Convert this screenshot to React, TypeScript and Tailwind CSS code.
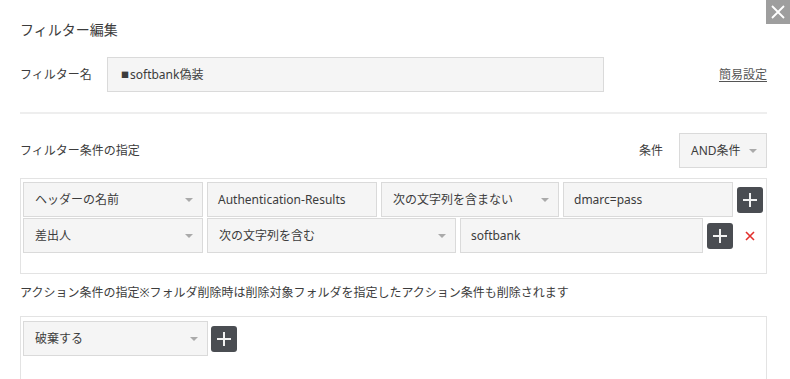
import React from "react";

const font = { fontFamily: '"Noto Sans", "Noto Sans CJK JP", sans-serif' };

const Arrow = () => (
  <span className="block w-0 h-0 border-l-[4px] border-r-[4px] border-t-[4px] border-l-transparent border-r-transparent border-t-[#aaaaaa]" />
);

const Select = ({ label, w }: { label: string; w: string }) => (
  <div
    className={`${w} h-[35px] shrink-0 flex items-center justify-between pl-[11px] pr-[9px] bg-[#f5f5f5] border border-[#dadada] text-[12px] text-[#3c3c3c]`}
  >
    <span>{label}</span>
    <Arrow />
  </div>
);

const Input = ({ value, w }: { value: string; w: string }) => (
  <div
    className={`${w} h-[35px] shrink-0 flex items-center pl-[10px] bg-[#f5f5f5] border border-[#dadada] text-[12px] text-[#3c3c3c]`}
  >
    {value}
  </div>
);

const PlusButton = () => (
  <button className="w-[26px] h-[26px] shrink-0 rounded-[3px] bg-[#4a4d52] flex items-center justify-center">
    <svg width="16" height="16" viewBox="0 0 16 16">
      <path d="M8 1v14M1 8h14" stroke="#f2f2f2" strokeWidth="2" />
    </svg>
  </button>
);

export default function App() {
  return (
    <div className="relative w-full h-[379px] overflow-hidden bg-white text-[#3c3c3c]" style={font}>
      {/* close */}
      <button className="absolute top-0 right-0 w-[24px] h-[24px] bg-[#9e9e9e] flex items-center justify-center">
        <svg width="14" height="14" viewBox="0 0 14 14">
          <path d="M1 1l12 12M13 1L1 13" stroke="#fff" strokeWidth="1.8" />
        </svg>
      </button>

      <div className="pl-[20px] pr-[23px] pt-[20px]">
        <div className="text-[14px] leading-[20px]">フィルター編集</div>

        {/* filter name */}
        <div className="mt-[17px] flex items-center justify-between">
          <div className="flex items-center">
            <span className="w-[87px] text-[12px]">フィルター名</span>
            <div className="w-[497px] h-[35px] flex items-center pl-[13px] bg-[#f5f5f5] border border-[#dadada] text-[12px]">
              <span className="text-[8px] mr-[1px]">■</span>softbank偽装
            </div>
          </div>
          <a className="text-[12px] text-[#555] underline underline-offset-2">簡易設定</a>
        </div>

        <div className="mt-[20px] h-[2px] bg-[#eeeeee]" />

        {/* filter conditions */}
        <div className="mt-[19px] flex items-center justify-between">
          <span className="text-[12px] mt-[1px]">フィルター条件の指定</span>
          <div className="flex items-center gap-[16px]">
            <span className="text-[12px]">条件</span>
            <Select label="AND条件" w="w-[88px]" />
          </div>
        </div>

        <div className="mt-[10px] border border-[#e3e3e3] px-[2px] pt-[3px] pb-[20px] flex flex-col gap-[1px]">
          <div className="flex items-center gap-[4px]">
            <Select label="ヘッダーの名前" w="w-[180px]" />
            <Input value="Authentication-Results" w="w-[170px]" />
            <Select label="次の文字列を含まない" w="w-[178px]" />
            <Input value="dmarc=pass" w="w-[170px]" />
            <PlusButton />
          </div>
          <div className="flex items-center gap-[4px]">
            <Select label="差出人" w="w-[180px]" />
            <Select label="次の文字列を含む" w="w-[249px]" />
            <Input value="softbank" w="w-[243px]" />
            <PlusButton />
            <span className="w-[26px] flex items-center justify-center">
              <svg width="10" height="10" viewBox="0 0 10 10">
                <path d="M1 1l8 8M9 1L1 9" stroke="#e2302d" strokeWidth="1.6" />
              </svg>
            </span>
          </div>
        </div>

        {/* actions */}
        <div className="mt-[10px] text-[12px] leading-[18px]">
          アクション条件の指定※フォルダ削除時は削除対象フォルダを指定したアクション条件も削除されます
        </div>
        <div className="mt-[14px] h-[80px] border border-[#e3e3e3] px-[2px] pt-[4px] flex items-start gap-[3px]">
          <Select label="破棄する" w="w-[185px]" />
          <div className="h-[35px] flex items-center">
            <PlusButton />
          </div>
        </div>
      </div>
    </div>
  );
}
